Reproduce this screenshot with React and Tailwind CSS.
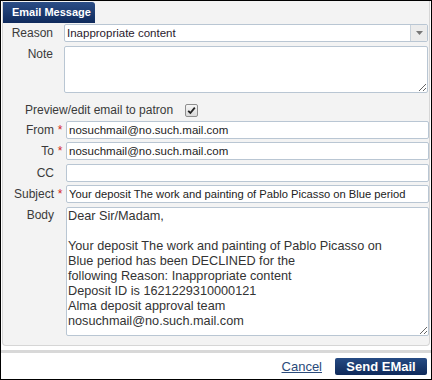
import React from "react";

const bodyText =
  "Dear Sir/Madam,\n\nYour deposit The work and painting of Pablo Picasso on\nBlue period has been DECLINED for the\nfollowing Reason: Inappropriate content\nDeposit ID is 1621229310000121\nAlma deposit approval team\nnosuchmail@no.such.mail.com";

function Row({ label, required, children, top }) {
  return (
    <div className={top ? "flex items-start" : "flex items-center"}>
      <div className={top ? "w-[51px] text-right leading-[15px] pt-[1px]" : "w-[51px] text-right leading-[15px]"}>{label}</div>
      <div className="w-[12px] text-center text-[#d4261f] text-[12px] leading-[12px]">{required ? "*" : ""}</div>
      {children}
    </div>
  );
}

function TextBox({ value, small }) {
  return (
    <input
      type="text"
      readOnly
      value={value}
      className={
        small
          ? "flex-1 h-[18px] bg-white border border-[#b9c6d3] rounded-[2px] px-[2px] text-[11.2px] text-[#222] outline-none"
          : "flex-1 h-[18px] bg-white border border-[#b9c6d3] rounded-[2px] px-[2px] text-[11.5px] text-[#222] outline-none"
      }
    />
  );
}

export default function App() {
  return (
    <div className="w-[432px] h-[380px] border border-black bg-white font-['Liberation_Sans',Arial,sans-serif] text-[12px] text-[#3a3a3a] flex flex-col">
      {/* panel */}
      <div className="mx-[1px] bg-[#f3f3f3] border-x border-b border-[#d6d6d6] rounded-b-[4px] pb-[9px]">
        <div className="mt-[1px] w-[92px] h-[21px] bg-linear-to-b from-[#2b4d86] to-[#0f2a5c] rounded-tr-[3px] flex items-center pl-[9px] text-white font-bold text-[11px]">
          Email Message
        </div>

        <div className="mt-[1px] flex items-center">
          <div className="w-[50px] text-right">Reason</div>
          <div className="ml-[11px] mr-[1px] flex-1 h-[18px] bg-white border border-[#b9c6d3] rounded-[2px] flex">
            <div className="flex-1 pl-[2px] text-[11.5px] leading-[16px] text-[#2a1a2e]">Inappropriate content</div>
            <div className="w-[17px] border-l border-[#c9d2db] bg-[#ececec] rounded-r-[2px] flex items-center justify-center">
              <svg width="7" height="4" viewBox="0 0 7 4">
                <path d="M0 0 H7 L3.5 4 Z" fill="#777" />
              </svg>
            </div>
          </div>
        </div>

        <div className="mt-[4px] flex items-start">
          <div className="w-[50px] text-right leading-[15px] pt-[1px]">Note</div>
          <textarea
            readOnly
            className="ml-[11px] mr-[1px] flex-1 h-[47px] bg-white border border-[#b9c6d3] rounded-[2px] outline-none resize overflow-hidden"
          />
        </div>

        <div className="mt-[10px] h-[14px] flex items-center pl-[22px]">
          <span>Preview/edit email to patron</span>
          <span className="ml-[12px] w-[13px] h-[13px] border border-[#8e8e8e] rounded-[2px] bg-linear-to-b from-[#f6f6f6] to-[#d9d9d9] flex items-center justify-center">
            <svg width="9" height="9" viewBox="0 0 9 9">
              <path d="M1.2 4.8 L3.4 7 L7.8 1.6" fill="none" stroke="#222" strokeWidth="1.8" />
            </svg>
          </span>
        </div>

        <div className="mt-[4px]">
          <Row label="From" required>
            <TextBox value="nosuchmail@no.such.mail.com" />
          </Row>
        </div>
        <div className="mt-[3px]">
          <Row label="To" required>
            <TextBox value="nosuchmail@no.such.mail.com" />
          </Row>
        </div>
        <div className="mt-[4px]">
          <Row label="CC">
            <TextBox value="" />
          </Row>
        </div>
        <div className="mt-[3px]">
          <Row label="Subject" required>
            <TextBox small value="Your deposit The work and painting of Pablo Picasso on Blue period" />
          </Row>
        </div>
        <div className="mt-[4px]">
          <Row label="Body" top>
            <textarea
              readOnly
              value={bodyText}
              className="flex-1 h-[129px] bg-white border border-[#b9c6d3] rounded-[2px] px-[1px] pt-[1px] text-[12.7px] leading-[15px] text-[#333] outline-none resize overflow-hidden whitespace-pre"
            />
          </Row>
        </div>
      </div>

      <div className="mt-[4px] h-[3px] bg-[#d8d8d8]" />

      <div className="mt-[5px] flex items-center justify-end pr-[4px]">
        <a href="#" className="text-[13px] text-[#2a4a7a] underline leading-[17px]">Cancel</a>
        <button className="ml-[13px] w-[92px] h-[17px] bg-linear-to-b from-[#264b84] to-[#0f2a5a] rounded-[2px] text-white font-bold text-[13px] leading-[17px]">
          Send EMail
        </button>
      </div>
    </div>
  );
}
